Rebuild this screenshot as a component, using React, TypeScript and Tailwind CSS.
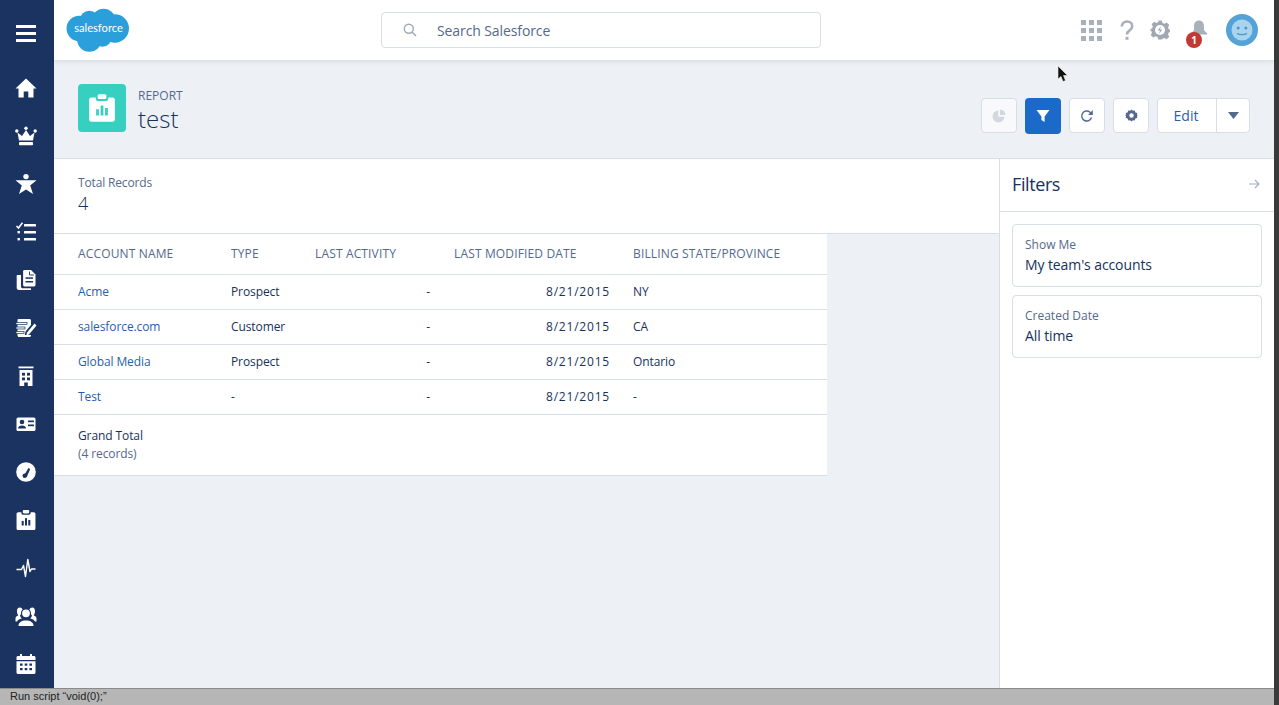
import React from "react";

const W = ({ children, w = 22, h = 22, vb = "0 0 22 22" }: { children: React.ReactNode; w?: number; h?: number; vb?: string }) => (
  <svg width={w} height={h} viewBox={vb} fill="#fff">{children}</svg>
);

const Clipboard = ({ fg, bars, size }: { fg: string; bars: string; size: number }) => (
  <svg width={size} height={size} viewBox="0 0 24 24">
    <path fill={fg} d="M3.5 3.5H7v1.2c0 .9.7 1.6 1.6 1.6h6.8c.9 0 1.6-.7 1.6-1.6V3.500h3.500c1 0 1.800.8 1.800 1.800v15.900c0 1-.8 1.800-1.800 1.800H3.500c-1 0-1.800-.8-1.800-1.800V5.300c0-1 .8-1.800 1.800-1.800z" />
    <rect x="8.500" y="1" width="7" height="3.800" rx="1.200" fill={fg} />
    <rect x="7.300" y="13" width="2.200" height="5" fill={bars} />
    <rect x="10.900" y="10" width="2.200" height="8" fill={bars} />
    <rect x="14.500" y="12" width="2.200" height="6" fill={bars} />
  </svg>
);

const navIcons: React.ReactNode[] = [
  <W><path d="M11 1.500 21.500 11.500H18.500V20.500H13.300V14.500H8.700V20.500H3.500V11.500H.5Z" /></W>,
  <W><circle cx="1.800" cy="6" r="1.700" /><circle cx="20.200" cy="6" r="1.700" /><circle cx="11" cy="3.200" r="1.700" /><path d="M2.500 7.500 7 11 11 5l4 6 4.500-3.500-1.500 8H4Z" /><rect x="4" y="17" width="14" height="3.300" rx=".8" /></W>,
  <W><circle cx="11" cy="3.600" r="2.700" /><path d="M.5 7.200H21.500L15.200 12.600 18 21 11 16.500 4 21 6.800 12.600Z" /></W>,
  <W><path d="M1.500 5 3.500 7 7.500 1.800" fill="none" stroke="#fff" strokeWidth="1.600" /><rect x="9" y="3" width="12" height="2.400" rx=".5" /><rect x="9" y="10" width="12" height="2.400" rx=".5" /><rect x="9" y="17" width="12" height="2.400" rx=".5" /><rect x="2.500" y="10" width="2.400" height="2.400" /><rect x="2.500" y="17" width="2.400" height="2.400" /></W>,
  <W><path d="M9.500 1h6.500l4.500 4.500V16c0 .8-.6 1.400-1.400 1.400H9.500c-.8 0-1.400-.6-1.400-1.400V2.400C8.100 1.600 8.700 1 9.500 1Z" /><path d="M14.500 2.500v3.500h4.500" fill="none" stroke="#1a3360" strokeWidth=".9" /><rect x="10.500" y="8.300" width="7.500" height="1.500" fill="#1a3360" /><rect x="10.500" y="12" width="7.500" height="1.500" fill="#1a3360" /><path d="M2.300 6h3.700v11.500c0 1 .8 1.800 1.800 1.800H16V21H4c-1.300 0-2.300-1-2.300-2.300V6.500Z" /></W>,
  <W><path d="M4 2h10.500c.8 0 1.500.7 1.500 1.500V8l-5.500 6.500-.7 3.500H16v.5c0 .8-.7 1.500-1.500 1.500H4c-.8 0-1.500-.7-1.500-1.500V2.900C2.500 2.400 3.300 2 4 2Z" /><rect x="1" y="5.500" width="11" height="2" fill="#fff" stroke="#1a3360" strokeWidth=".7" /><rect x="1" y="10" width="9" height="2" fill="#fff" stroke="#1a3360" strokeWidth=".7" /><rect x="1" y="14.500" width="8" height="2" fill="#fff" stroke="#1a3360" strokeWidth=".7" /><path d="M19.500 6.500 21.500 8.500 14 17.500 11.300 18.500 12 15.600Z" /></W>,
  <W><rect x="3.500" y="1.500" width="15" height="1.800" /><path d="M4.500 5H17.500V21H12.800V17.500H9.200V21H4.500Z" /><rect x="7" y="7.800" width="3" height="2.800" fill="#1a3360" /><rect x="12" y="7.800" width="3" height="2.800" fill="#1a3360" /><rect x="7" y="12.500" width="3" height="2.800" fill="#1a3360" /><rect x="12" y="12.500" width="3" height="2.800" fill="#1a3360" /></W>,
  <W><rect x="1.500" y="4.500" width="19" height="13.500" rx="1.600" /><circle cx="7" cy="9" r="2.300" fill="#1a3360" /><path d="M3 15.500c0-2 1.800-3 4-3s4 1 4 3Z" fill="#1a3360" /><rect x="13" y="7.500" width="6" height="1.700" fill="#1a3360" /><rect x="13" y="11.500" width="6" height="1.700" fill="#1a3360" /></W>,
  <W><circle cx="11" cy="11" r="9.800" /><path d="M8.500 15.200 13.500 7 15.200 8 11.800 16Z" fill="#1a3360" /><circle cx="9.700" cy="14.800" r="2.200" fill="#1a3360" /></W>,
  <Clipboard fg="#fff" bars="#1a3360" size={22} />,
  <svg width="22" height="22" viewBox="0 0 22 22" fill="none" stroke="#fff" strokeWidth="1.400" strokeLinejoin="round"><path d="M1.500 12.500H6.500L8.500 8.500 10.500 19.500 12.800 2.500 15 14.500 16.500 12H20.500" /></svg>,
  <W><circle cx="11" cy="8.300" r="3.900" /><path d="M3.500 21c0-3.600 3-5.500 7.500-5.500s7.500 1.900 7.500 5.500Z" /><path d="M4.800 2.500a3 3 0 0 1 2.800 1.900C6.400 5.500 5.800 7.300 6 9.300 5.500 10 5.200 10.200 5 10.800c.3 1 1 1.900 1.800 2.600C4 14 2.400 15.200 2 16.500H.5v-3c0-1.700 1.200-2.300 2.800-3.200C2.400 9.300 2 8 2 6c0-2 1-3.500 2.800-3.500Z" /><path d="M17.200 2.500a3 3 0 0 0-2.800 1.900c1.200 1.100 1.800 2.900 1.600 4.900.5.700.8.900 1 1.500-.3 1-1 1.900-1.800 2.600 2.800.6 4.400 1.800 4.800 3.100h1.500v-3c0-1.700-1.200-2.300-2.800-3.200.9-1 1.300-2.300 1.300-4.300 0-2-1-3.500-2.800-3.500Z" /></W>,
  <W><rect x="5" y="1" width="2" height="3.500" /><rect x="15" y="1" width="2" height="3.500" /><path d="M3 3h16c.8 0 1.500.7 1.500 1.500V7H1.500V4.500C1.500 3.700 2.200 3 3 3Z" /><path d="M1.500 8.200h19V19.500c0 .8-.7 1.500-1.500 1.500H3c-.8 0-1.500-.7-1.500-1.500Z" /><g fill="#1a3360"><rect x="5" y="10.500" width="2.600" height="2.200" /><rect x="9.700" y="10.500" width="2.600" height="2.200" /><rect x="14.400" y="10.500" width="2.600" height="2.200" /><rect x="5" y="15" width="2.600" height="2.200" /><rect x="9.700" y="15" width="2.600" height="2.200" /><rect x="14.400" y="15" width="2.600" height="2.200" /></g></W>,
];

const rows = [
  ["Acme", "Prospect", "NY"],
  ["salesforce.com", "Customer", "CA"],
  ["Global Media", "Prospect", "Ontario"],
  ["Test", "-", "-"],
];

const gridCols = "grid grid-cols-[177px_84px_139px_179px_194px]";

function Sidebar() {
  return (
    <aside className="w-[54px] shrink-0 bg-[#1a3360] flex flex-col items-center pt-[9px] pr-[2px]">
      <div className="h-[48px] flex flex-col justify-center gap-[4px]">
        <div className="w-[20px] h-[3px] bg-white" />
        <div className="w-[20px] h-[3px] bg-white" />
        <div className="w-[20px] h-[3px] bg-white" />
      </div>
      <div className="mt-[7px] flex flex-col items-center">
        {navIcons.map((ic, i) => (
          <div key={i} className="h-[48px] flex items-center justify-center">{ic}</div>
        ))}
      </div>
    </aside>
  );
}

function TopBar() {
  return (
    <header className="h-[60px] shrink-0 bg-white shadow-[0_2px_4px_rgba(0,0,0,0.08)] relative z-10 flex items-center pl-[12px] pr-[16px]">
      <svg width="65" height="46" viewBox="0 0 64 45" className="shrink-0 -mt-[1px] -ml-[1px]">
        <g fill="#2b9fdc">
          <circle cx="14" cy="21" r="12.500" />
          <circle cx="24" cy="13" r="9.500" />
          <circle cx="38" cy="13" r="11.500" />
          <circle cx="49" cy="21" r="14" />
          <circle cx="37" cy="30" r="9" />
          <circle cx="24" cy="32" r="12" />
        </g>
        <text x="33" y="24.500" textAnchor="middle" fill="#fff" fontSize="11" fontFamily="Lato, sans-serif">salesforce</text>
      </svg>
      <div className="ml-[251px] w-[440px] h-[36px] border border-[#d8dde6] rounded-[4px] flex items-center">
        <svg width="14" height="14" viewBox="0 0 14 14" fill="none" stroke="#a0a8b5" strokeWidth="1.400" className="ml-[21px]">
          <circle cx="5.800" cy="5.800" r="4.500" />
          <path d="M9 9 13 13" />
        </svg>
        <span className="ml-[20px] text-[14px] tracking-[-0.1px] text-[#54698d]">Search Salesforce</span>
      </div>
      <div className="ml-auto flex items-center">
        <svg width="21" height="21" viewBox="0 0 21 21" fill="#a8b0bb">
          {[0, 8, 16].flatMap((y) => [0, 8, 16].map((x) => <rect key={`${x}-${y}`} x={x} y={y} width="5" height="5" />))}
        </svg>
        <svg width="14" height="21" viewBox="0 0 14 21" className="ml-[18px]" fill="none">
          <path d="M1.800 6.500C1.800 3.500 4 1.500 7 1.500s5.200 2 5.200 4.700c0 2-1 3-2.600 4.200C8 11.500 7 12.500 7 14.500" stroke="#a8b0bb" strokeWidth="2.600" />
          <rect x="5.500" y="16.800" width="3" height="3" fill="#a8b0bb" />
        </svg>
        <svg width="20" height="20" viewBox="0 0 22 22" className="ml-[16px]" fill="#a0a8b3">
          <path d="M9 .5h4l.7 2.800 2.200.9 2.500-1.400 2.800 2.800-1.400 2.500.9 2.200 1.800.7v2l-1.800.7-.9 2.200 1.400 2.500-2.800 2.800-2.500-1.400-2.200.9L13 21.500H9l-.7-2.800-2.200-.9-2.500 1.400-2.800-2.800 1.400-2.500-.9-2.200L.5 12v-2l1.800-.7.9-2.200L1.800 4.600l2.800-2.800 2.500 1.400 2.200-.9Z" />
          <circle cx="11" cy="11" r="5.500" fill="#fff" />
          <path d="M12 6.500 8.500 11.500H11L10 15.500 13.500 10.500H11Z" fill="#a0a8b3" />
        </svg>
        <div className="relative ml-[20px] w-[18px] h-[18px] -mt-[3px]">
          <svg width="18" height="18" viewBox="0 0 20 20" fill="#a8b0bb">
            <path d="M10 .5c3.500 0 5.500 2.700 5.500 6v4c0 1.500 1.500 2.500 3.500 4v1.500H1V14.500c2-1.500 3.500-2.500 3.500-4v-4C4.500 3.200 6.500.5 10 .5Z" />
          </svg>
          <span className="absolute left-[-4px] top-[12px] w-[16px] h-[16px] rounded-full bg-[#c23934] text-white text-[10px] font-bold leading-[16px] text-center">1</span>
        </div>
        <svg width="32" height="32" viewBox="0 0 32 32" className="ml-[18px]">
          <circle cx="16" cy="16" r="16" fill="#54a3d8" />
          <circle cx="16" cy="16" r="10.500" fill="#a9d4ee" />
          <circle cx="12.200" cy="14" r="1.500" fill="#4f94c6" />
          <circle cx="19.800" cy="14" r="1.500" fill="#4f94c6" />
          <path d="M11 19.500c2.500 1.600 7.500 1.600 10 0" fill="none" stroke="#4f94c6" strokeWidth="1.300" />
        </svg>
      </div>
    </header>
  );
}

const btn = "w-[36px] h-[35px] rounded-[4px] border border-[#d8dde6] flex items-center justify-center";

function PageHeader() {
  return (
    <div className="h-[99px] shrink-0 flex items-start pl-[24px] pr-[24px] border-b border-[#d8dde6]">
      <div className="mt-[24px] w-[48px] h-[48px] rounded-[4px] bg-[#37cfc0] flex items-center justify-center">
        <Clipboard fg="#fff" bars="#37cfc0" size={30} />
      </div>
      <div className="ml-[12px] mt-[28px]">
        <div className="text-[12px] leading-[16px] text-[#54698d]">REPORT</div>
        <div className="text-[24px] leading-[30px] font-light text-[#16325c]">test</div>
      </div>
      <div className="ml-auto mt-[38px] flex items-start gap-[8px]">
        <div className={`${btn} bg-[#f8f9fb]`}>
          <svg width="14" height="14" viewBox="0 0 14 14" fill="#d3d7de">
            <path d="M6.300 1.500a6 6 0 1 0 6.200 6.200H6.300Z" />
            <path d="M8 0.500a6 6 0 0 1 5.500 5.500H8Z" />
          </svg>
        </div>
        <div className="w-[36px] h-[36px] rounded-[4px] bg-[#1b69c9] flex items-center justify-center">
          <svg width="14" height="14" viewBox="0 0 14 14" fill="#fff"><path d="M.5 1h13L8.600 7.500V13L5.400 11V7.500Z" /></svg>
        </div>
        <div className={`${btn} bg-white`}>
          <svg width="14" height="14" viewBox="0 0 14 14" fill="none" stroke="#54698d" strokeWidth="1.400">
            <path d="M11.500 8.500A5 5 0 1 1 10 3.200L12 5" />
            <path d="M12.800 1v5H8" fill="#54698d" stroke="none" />
          </svg>
        </div>
        <div className={`${btn} bg-white`}>
          <svg width="13" height="13" viewBox="0 0 14 14" fill="#54698d">
            <path d="M7 .5 8.500 2l2-.3.7 2 2 .7-.3 2L14 7l-1.100.6.300 2-2 .7-.7 2-2-.3L7 13.500 5.500 12l-2 .3-.7-2-2-.7.3-2L0 7l1.100-.6-.3-2 2-.7.7-2 2 .3Z" />
            <circle cx="7" cy="7" r="2.400" fill="#fff" />
          </svg>
        </div>
        <div className="w-[93px] h-[35px] rounded-[4px] bg-white border border-[#d8dde6] flex items-center">
          <div className="w-[58px] pr-[2px] text-center text-[14px] text-[#2a5fa8]">Edit</div>
          <div className="flex-1 h-full border-l border-[#d8dde6] flex items-center justify-center">
            <svg width="11" height="7" viewBox="0 0 11 7" fill="#54698d"><path d="M0 0h11L5.500 7Z" /></svg>
          </div>
        </div>
      </div>
    </div>
  );
}

function ReportBody() {
  return (
    <div className="flex-1 min-w-0 flex flex-col">
      <div className="h-[75px] bg-white border-b border-[#d8dde6] pl-[24px] pt-[16px]">
        <div className="text-[12px] leading-[16px] tracking-[-0.15px] text-[#54698d]">Total Records</div>
        <div className="text-[18px] leading-[24px] text-[#16325c] font-light">4</div>
      </div>
      <div className="w-[773px] bg-white border-b border-[#d8dde6] text-[12px] tracking-[-0.1px]">
        <div className={`${gridCols} h-[41px] items-center border-b border-[#d8dde6] tracking-[0.15px] text-[#54698d]`}>
          <div className="pl-[24px]">ACCOUNT NAME</div>
          <div>TYPE</div>
          <div>LAST ACTIVITY</div>
          <div>LAST MODIFIED DATE</div>
          <div>BILLING STATE/PROVINCE</div>
        </div>
        {rows.map((r) => (
          <div key={r[0]} className={`${gridCols} h-[35px] items-center border-b border-[#d8dde6] text-[#16325c]`}>
            <div className="pl-[24px] text-[#1f5fae]">{r[0]}</div>
            <div>{r[1]}</div>
            <div className="text-right pr-[24px]">-</div>
            <div className="text-right pr-[23px] tracking-[0.8px]">8/21/2015</div>
            <div>{r[2]}</div>
          </div>
        ))}
        <div className="h-[60px] pl-[24px] pt-[12px] leading-[18px] text-[#16325c]">
          <div>Grand Total</div>
          <div className="text-[#54698d]">(4 records)</div>
        </div>
      </div>
    </div>
  );
}

function FilterCard({ label, value }: { label: string; value: string }) {
  return (
    <div className="h-[63px] rounded-[4px] border border-[#d8dde6] px-[12px] pt-[12px]">
      <div className="text-[12px] leading-[16px] text-[#54698d]">{label}</div>
      <div className="text-[14px] leading-[24px] tracking-[-0.1px] text-[#16325c]">{value}</div>
    </div>
  );
}

function FiltersPanel() {
  return (
    <aside className="w-[275px] shrink-0 bg-white border-l border-[#d8dde6] flex flex-col">
      <div className="h-[53px] shrink-0 pb-[2px] border-b border-[#d8dde6] flex items-center justify-between pl-[12px] pr-[14px]">
        <span className="text-[18px] tracking-[-0.4px] text-[#16325c]">Filters</span>
        <svg width="12" height="12" viewBox="0 0 12 12" fill="none" stroke="#a8b0bb" strokeWidth="1.200">
          <path d="M1 6h10M7 2l4 4-4 4" />
        </svg>
      </div>
      <div className="pl-[12px] pr-[12px] pt-[12px] flex flex-col gap-[8px]">
        <FilterCard label="Show Me" value="My team's accounts" />
        <FilterCard label="Created Date" value="All time" />
      </div>
    </aside>
  );
}

export default function App() {
  return (
    <div className="w-[1279px] h-[705px] overflow-hidden flex font-['Open_Sans',sans-serif] bg-[#edf1f6]">
      <div className="flex-1 min-w-0 flex flex-col">
        <div className="flex-1 min-h-0 flex">
          <Sidebar />
          <main className="flex-1 min-w-0 flex flex-col relative">
            <TopBar />
            <PageHeader />
            <div className="flex-1 min-h-0 flex">
              <ReportBody />
              <FiltersPanel />
            </div>
            <svg width="12" height="18" viewBox="0 0 12 18" className="absolute left-[1003px] top-[65px] z-20">
              <path d="M1 1V14L4 11.500 6 16.500 8.500 15.500 6.500 10.500H10.500Z" fill="#111" stroke="#eee" strokeWidth=".6" />
            </svg>
          </main>
        </div>
        <div className="h-[17px] shrink-0 bg-[#b6b6b6] border-t border-[#8a8a8a] pl-[10px] text-[11px] leading-[15px] text-[#222] font-['Liberation_Sans',sans-serif]">Run script “void(0);”</div>
      </div>
      <div className="w-[5px] shrink-0 bg-[#3a3a3a]" />
    </div>
  );
}
